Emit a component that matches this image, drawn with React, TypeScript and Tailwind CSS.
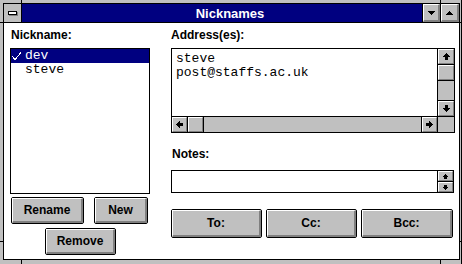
import React from "react";

const sans = { fontFamily: '"Liberation Sans", Arial, sans-serif' };
const mono = { fontFamily: '"Liberation Mono", "Courier New", monospace' };

function ArrowUp() {
  return (
    <svg width="7" height="7" viewBox="0 0 7 7" shapeRendering="crispEdges">
      <rect x="3" y="0" width="1" height="1" fill="#000" />
      <rect x="2" y="1" width="3" height="1" fill="#000" />
      <rect x="1" y="2" width="5" height="1" fill="#000" />
      <rect x="0" y="3" width="7" height="1" fill="#000" />
      <rect x="2" y="4" width="3" height="3" fill="#000" />
    </svg>
  );
}

function Arrow({ dir }: { dir: "up" | "down" | "left" | "right" }) {
  const rot = dir === "up" ? 0 : dir === "down" ? 180 : dir === "left" ? 270 : 90;
  return (
    <div style={{ transform: `rotate(${rot}deg)` }} className="flex">
      <ArrowUp />
    </div>
  );
}

function SmallArrow({ down }: { down?: boolean }) {
  return (
    <svg width="5" height="5" viewBox="0 0 5 5" shapeRendering="crispEdges" style={{ transform: down ? "rotate(180deg)" : undefined }}>
      <rect x="2" y="0" width="1" height="1" fill="#000" />
      <rect x="1" y="1" width="3" height="1" fill="#000" />
      <rect x="0" y="2" width="5" height="1" fill="#000" />
      <rect x="1" y="3" width="3" height="2" fill="#000" />
    </svg>
  );
}

function Tri({ down }: { down?: boolean }) {
  return (
    <svg width="7" height="4" viewBox="0 0 7 4" shapeRendering="crispEdges" style={{ transform: down ? "rotate(180deg)" : undefined }}>
      <rect x="3" y="0" width="1" height="1" fill="#000" />
      <rect x="2" y="1" width="3" height="1" fill="#000" />
      <rect x="1" y="2" width="5" height="1" fill="#000" />
      <rect x="0" y="3" width="7" height="1" fill="#000" />
    </svg>
  );
}

function SBtn({ children, className = "" }: { children?: React.ReactNode; className?: string }) {
  return (
    <div
      className={`flex items-center justify-center bg-[#c0c0c0] border-t border-l border-t-white border-l-white border-r border-b border-r-[#808080] border-b-[#808080] ${className}`}
    >
      {children}
    </div>
  );
}

function PushButton({ label, w, h }: { label: string; w: string; h: string }) {
  return (
    <div className={`flex border border-black rounded-[2px] ${w} ${h}`}>
      <div
        className="flex-1 flex items-center justify-center bg-[#c0c0c0] border-t border-l border-t-white border-l-white border-r-2 border-b-2 border-r-[#808080] border-b-[#808080] text-[12px] font-bold text-black leading-none"
        style={sans}
      >
        {label}
      </div>
    </div>
  );
}

function TitleBtn({ down }: { down?: boolean }) {
  return (
    <div className="flex items-center justify-center bg-[#c0c0c0] border-t border-l border-t-white border-l-white border-r-2 border-b-2 border-r-[#808080] border-b-[#808080] w-full h-full">
      <Tri down={down} />
    </div>
  );
}

export default function App() {
  return (
    <div className="relative w-[462px] h-[264px] bg-[#c0c0c0] overflow-hidden pl-[3px] pt-[3px] select-none">
      {/* frame corner ticks */}
      <div className="absolute left-[21px] top-0 w-px h-[4px] bg-black" />
      <div className="absolute left-[440px] top-0 w-px h-[4px] bg-black" />
      <div className="absolute left-[21px] top-[259px] w-px h-[5px] bg-black" />
      <div className="absolute left-[440px] top-[259px] w-px h-[5px] bg-black" />
      <div className="absolute left-0 top-[22px] w-[4px] h-px bg-black" />
      <div className="absolute left-[459px] top-[22px] w-[3px] h-px bg-black" />
      <div className="absolute left-0 top-[241px] w-[4px] h-px bg-black" />
      <div className="absolute left-[459px] top-[241px] w-[3px] h-px bg-black" />
      <div className="absolute left-[461px] top-0 w-px h-[264px] bg-black" />

      <div className="flex flex-col w-[457px] h-[257px] border border-black">
        {/* title bar */}
        <div className="flex h-[19px] border-b border-black">
          <div className="w-[17px] h-[18px] bg-[#c0c0c0] border-r border-black flex items-center justify-center box-content">
            <div className="w-[9px] h-[4px] border border-black bg-white shadow-[1px_1px_0_#808080]" />
          </div>
          <div
            className="flex-1 h-[18px] bg-[#000080] text-white text-[13px] font-bold flex items-center justify-center leading-none"
            style={sans}
          >
            <span className="ml-[16px]">Nicknames</span>
          </div>
          <div className="w-[17px] h-[18px] border-l border-black box-content">
            <TitleBtn down />
          </div>
          <div className="w-[18px] h-[18px] border-l border-black box-content">
            <TitleBtn />
          </div>
        </div>

        {/* client */}
        <div className="flex-1 bg-white flex pl-[6px] text-black" style={sans}>
          {/* left column */}
          <div className="flex flex-col w-[140px]">
            <div className="mt-[5px] h-[14px] text-[12px] font-bold leading-[14px] pl-[1px]">Nickname:</div>
            <div className="mt-[6px] h-[146px] border border-black flex flex-col text-[13px] leading-[14px]" style={mono}>
              <div className="h-[14px] bg-[#000080] text-white flex items-center">
                <svg width="10" height="9" viewBox="0 0 10 9" className="ml-[1px] mr-[3px]" shapeRendering="crispEdges">
                  <path d="M0.5 4.5 L3 7.5 L9 0.5" stroke="#fff" strokeWidth="1.1" fill="none" />
                </svg>
                <span>dev</span>
              </div>
              <div className="h-[14px] flex items-center pl-[14px]">steve</div>
            </div>
            <div className="mt-[3px] flex pl-[1px] gap-[10px]">
              <PushButton label="Rename" w="w-[73px]" h="h-[27px]" />
              <PushButton label="New" w="w-[54px]" h="h-[27px]" />
            </div>
            <div className="mt-[4px] flex pl-[35px]">
              <PushButton label="Remove" w="w-[71px]" h="h-[27px]" />
            </div>
          </div>

          {/* right column */}
          <div className="flex flex-col w-[284px] ml-[21px]">
            <div className="mt-[5px] h-[14px] text-[12px] font-bold leading-[14px]">Address(es):</div>
            <div className="mt-[6px] h-[85px] border border-black flex flex-col">
              <div className="flex flex-1 min-h-0">
                <div className="flex-1 pl-[4px] pt-[3px] text-[13px] leading-[14px]" style={mono}>
                  <div>steve</div>
                  <div>post@staffs.ac.uk</div>
                </div>
                <div className="w-[16px] border-l border-black flex flex-col bg-[#c0c0c0] box-content">
                  <div className="h-[15px] border-b border-black box-content">
                    <SBtn className="h-full"><Arrow dir="up" /></SBtn>
                  </div>
                  <div className="h-[15px] border-b border-black box-content">
                    <SBtn className="h-full" />
                  </div>
                  <div className="flex-1" />
                  <div className="h-[15px] border-t border-black box-content">
                    <SBtn className="h-full"><Arrow dir="down" /></SBtn>
                  </div>
                </div>
              </div>
              <div className="h-[15px] border-t border-black flex box-content">
                <div className="flex-1 flex bg-[#c0c0c0]">
                  <div className="w-[15px] border-r border-black box-content">
                    <SBtn className="h-full"><Arrow dir="left" /></SBtn>
                  </div>
                  <div className="w-[15px] border-r border-black box-content">
                    <SBtn className="h-full" />
                  </div>
                  <div className="flex-1" />
                  <div className="w-[15px] border-l border-black box-content">
                    <SBtn className="h-full"><Arrow dir="right" /></SBtn>
                  </div>
                </div>
                <div className="w-[16px] border-l border-black bg-[#c0c0c0] box-content" />
              </div>
            </div>

            <div className="mt-[14px] h-[14px] text-[12px] font-bold leading-[14px] pl-[1px]">Notes:</div>
            <div className="mt-[9px] w-[283px] h-[23px] border border-black flex">
              <div className="flex-1" />
              <div className="w-[15px] border-l border-black flex flex-col box-content">
                <div className="h-[10px] border-b border-black box-content">
                  <SBtn className="h-full"><SmallArrow /></SBtn>
                </div>
                <div className="h-[10px]">
                  <SBtn className="h-full"><SmallArrow down /></SBtn>
                </div>
              </div>
            </div>

            <div className="mt-[16px] flex gap-[4px]">
              <PushButton label="To:" w="w-[91px]" h="h-[29px]" />
              <PushButton label="Cc:" w="w-[91px]" h="h-[29px]" />
              <PushButton label="Bcc:" w="w-[92px]" h="h-[29px]" />
            </div>
          </div>
        </div>
      </div>
    </div>
  );
}
